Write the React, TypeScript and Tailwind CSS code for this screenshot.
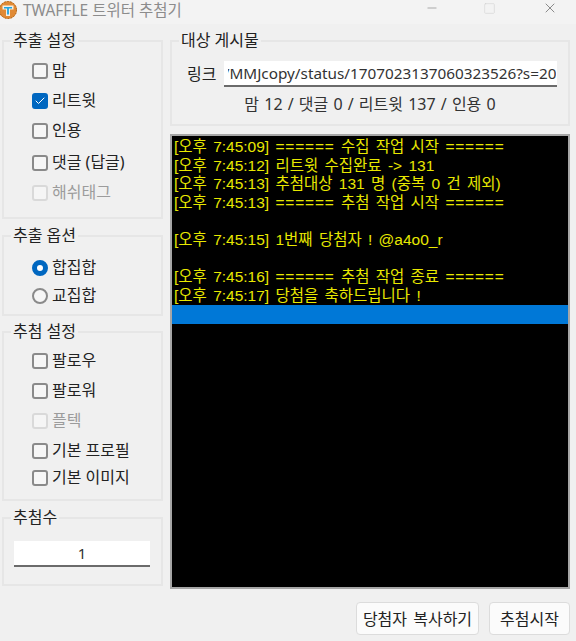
import { ReactNode } from "react";
import { Check, Minus, Square, X } from "lucide-react";

const font = "font-['Noto_Sans','Noto_Sans_CJK_KR',sans-serif]";

const logLines = [
  "[오후 7:45:09] ====== 수집 작업 시작 ======",
  "[오후 7:45:12] 리트윗 수집완료 -> 131",
  "[오후 7:45:13] 추첨대상 131 명 (중복 0 건 제외)",
  "[오후 7:45:13] ====== 추첨 작업 시작 ======",
  "",
  "[오후 7:45:15] 1번째 당첨자 ! @a4o0_r",
  "",
  "[오후 7:45:16] ====== 추첨 작업 종료 ======",
  "[오후 7:45:17] 당첨을 축하드립니다 !",
];

function Group({ title, className, children }: { title: string; className: string; children: ReactNode }) {
  return (
    <fieldset className={`border-2 border-[#e6e6e6] ${className}`}>
      <legend className="ml-[7px] px-[2px] text-[16px] leading-[19px] text-[#222]">{title}</legend>
      {children}
    </fieldset>
  );
}

function CheckRow({ label, checked, disabled, className = "" }: { label: string; checked?: boolean; disabled?: boolean; className?: string }) {
  return (
    <div className={`flex items-center gap-[4px] pl-[28px] ${className}`}>
      <span
        className={`flex h-[16px] w-[16px] items-center justify-center rounded-[3px] border-2 ${
          checked ? "border-[#0067c0] bg-[#0067c0]" : disabled ? "border-[#d9d9d9] bg-[#f5f5f5]" : "border-[#8a8a8a] bg-[#f6f6f6]"
        }`}
      >
        {checked && <Check size={12} strokeWidth={2} className="text-white" />}
      </span>
      <span className={`text-[16px] leading-[19px] ${disabled ? "text-[#9c9c9c]" : "text-[#222]"}`}>{label}</span>
    </div>
  );
}

function RadioRow({ label, checked }: { label: string; checked?: boolean }) {
  return (
    <div className="flex items-center gap-[4px] pl-[28px]">
      <span
        className={`h-[16px] w-[16px] rounded-full bg-[#f6f6f6] ${
          checked ? "border-[5px] border-[#0067c0] bg-white" : "border-2 border-[#8a8a8a]"
        }`}
      />
      <span className="text-[16px] leading-[19px] text-[#222]">{label}</span>
    </div>
  );
}

// the ====== runs sit a little wider than the rest of the log text
function LogLine({ line }: { line: string }) {
  return (
    <div className="h-[18.600px] whitespace-nowrap pl-[2px] leading-[18.600px]">
      {line.split(/(=+)/).map((part, i) =>
        part.startsWith("=") ? (
          <span key={i} className="tracking-[0.8px]">
            {part}
          </span>
        ) : (
          part
        )
      )}
    </div>
  );
}

export default function App() {
  return (
    <div className={`flex h-[641px] w-[576px] flex-col overflow-hidden bg-[#f0f0f0] ${font}`}>
      {/* title bar */}
      <div className="flex h-[24px] shrink-0 items-center bg-[#f3f3f3]">
        <svg width="18" height="18" viewBox="0 0 18 18" className="-ml-[1px] -mt-[5px] shrink-0">
          <circle cx="9" cy="9" r="9" fill="#e08a35" />
          <circle cx="9" cy="9" r="8.500" fill="none" stroke="#a8651f" strokeWidth="1" strokeDasharray="1.500 1.500" />
          <path d="M3.500 4.500h11v4h-3.500v6.500H7V8.500H3.500z" fill="#f6efe2" />
          <path d="M5 6h8v1.500H9.900V13.500H8.100V7.500H5z" fill="#1fa3e0" />
        </svg>
        <span className="ml-[6px] -mt-[5px] whitespace-nowrap text-[15.500px] leading-[20px] text-[#8c8c8c]">TWAFFLE 트위터 추첨기</span>
        <div className="ml-auto flex items-center -mt-[8px]">
          <Minus size={14} strokeWidth={1} className="mr-[44px] text-[#777]" />
          <Square size={13} strokeWidth={1} className="mr-[46px] text-[#cfcfcf]" />
          <X size={16} strokeWidth={1} className="mr-[18px] text-[#555]" />
        </div>
      </div>

      <div className="flex flex-1 gap-[7px] pl-[2px] pr-[6px] pt-[7px]">
        {/* left column */}
        <div className="flex w-[161px] shrink-0 flex-col">
          <Group title="추출 설정" className="h-[188px]">
            <div className="flex flex-col pt-[11px]">
              <CheckRow label="맘" />
              <CheckRow label="리트윗" checked className="mt-[11px]" />
              <CheckRow label="인용" className="mt-[11px]" />
              <CheckRow label="댓글 (답글)" className="mt-[13px]" />
              <CheckRow label="해쉬태그" disabled className="mt-[11px]" />
            </div>
          </Group>
          <Group title="추출 옵션" className="mt-[7px] h-[90px]">
            <div className="flex flex-col gap-[9px] pt-[13px]">
              <RadioRow label="합집합" checked />
              <RadioRow label="교집합" />
            </div>
          </Group>
          <Group title="추첨 설정" className="mt-[6px] h-[179px]">
            <div className="flex flex-col pt-[10px]">
              <CheckRow label="팔로우" />
              <CheckRow label="팔로워" className="mt-[11px]" />
              <CheckRow label="플텍" disabled className="mt-[11px]" />
              <CheckRow label="기본 프로필" className="mt-[11px]" />
              <CheckRow label="기본 이미지" className="mt-[8px]" />
            </div>
          </Group>
          <Group title="추첨수" className="mt-[7px] h-[78px]">
            <div className="ml-[10px] mr-[11px] mt-[14px] flex h-[26px] items-center justify-center border-b-2 border-[#6b6b6b] bg-white text-[15px] text-[#333]">
              1
            </div>
          </Group>
        </div>

        {/* right column */}
        <div className="flex min-w-0 flex-1 flex-col">
          <Group title="대상 게시물" className="h-[95px]">
            <div className="mt-[11px] flex items-center">
              <span className="ml-[15px] text-[16px] leading-[19px] text-[#222]">링크</span>
              <div className="ml-[8px] h-[26px] w-[333px] border-b-2 border-[#6b6b6b] bg-white pl-[4px] pr-[1px]">
                <div className="flex justify-end overflow-hidden whitespace-nowrap text-[15.300px] leading-[24px] text-[#333]">
                  <span className="shrink-0">/MMJcopy/status/1707023137060323526?s=20</span>
                </div>
              </div>
            </div>
            <p className="mt-[8px] text-center text-[16px] leading-[19px] text-[#333] [word-spacing:1px]">맘 12 / 댓글 0 / 리트윗 137 / 인용 0</p>
          </Group>

          <div className="mt-[8px] h-[455px] border-2 border-[#a6a6a6] bg-black">
            <div className="pt-[2px] font-['Liberation_Sans','Noto_Sans_CJK_KR',sans-serif] text-[15.500px] text-[#e8e800] [word-spacing:2px]">
              {logLines.map((line, i) => (
                <LogLine key={i} line={line} />
              ))}
            </div>
            <div className="h-[19px] bg-[#0078d7]" />
          </div>

          {/* bottom buttons */}
          <div className="mt-[13px] flex justify-end gap-[10px]">
            <button className="h-[33px] w-[123px] rounded-[4px] border border-[#dcdcdc] bg-[#fbfbfb] text-[16px] text-[#222] [word-spacing:2px]">
              당첨자 복사하기
            </button>
            <button className="h-[33px] w-[81px] rounded-[4px] border border-[#dcdcdc] bg-[#fbfbfb] text-[16px] text-[#222]">
              추첨시작
            </button>
          </div>
        </div>
      </div>
    </div>
  );
}
